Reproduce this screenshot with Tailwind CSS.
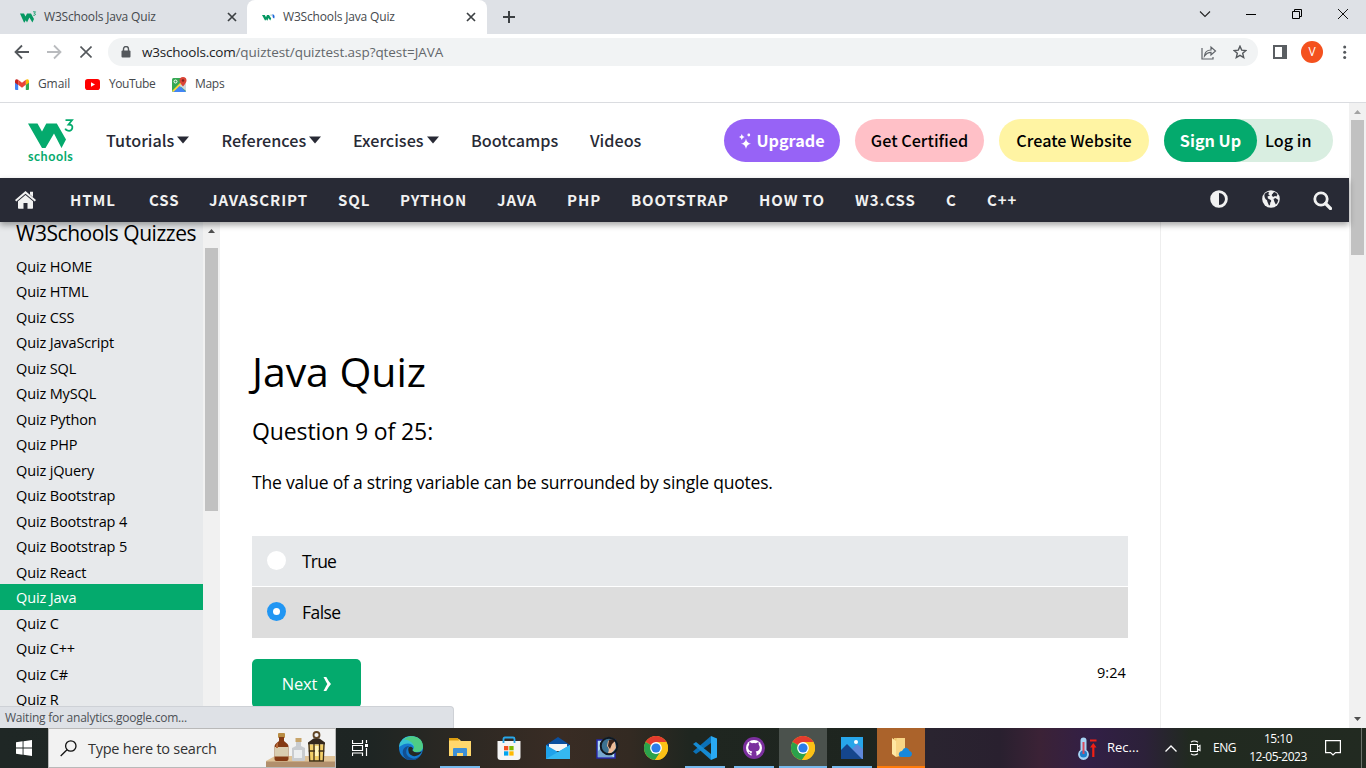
<!DOCTYPE html>
<html lang="en">
<head>
<meta charset="utf-8">
<title>W3Schools Java Quiz</title>
<script src="https://cdn.jsdelivr.net/npm/@tailwindcss/browser@4"></script>
</head>
<body class="w-[1366px] h-[768px] overflow-hidden bg-white font-['Open_Sans','Noto_Sans',sans-serif] text-black whitespace-nowrap">
<svg class="hidden">
  <defs>
    <symbol id="chrome" viewBox="0 0 24 24">
      <circle cx="12" cy="12" r="12" fill="#fbc116"/>
      <path d="M12 12 1.6 6A12 12 0 0 1 22.4 6z" fill="#e33b2e"/>
      <path d="M12 12 1.6 6A12 12 0 0 0 11 24l6.2-9z" fill="#2ba24c"/>
      <path d="M12 6H22.4A12 12 0 0 1 11 24l6-9z" fill="#fbc116"/>
      <circle cx="12" cy="12" r="5.9" fill="#fff"/><circle cx="12" cy="12" r="4.6" fill="#2a7de9"/>
    </symbol>
  </defs>
</svg>

<!-- Tab strip -->
<div class="flex h-[34px] bg-[#dee1e6] text-[12px] text-[#45494d] tracking-[-0.17px]">
  <div class="flex w-[247px] items-center pl-[20px]">
    <svg class="w-[17px] h-[12px]" viewBox="0 0 17 12"><path d="M0 2.500h4l1.500 3 1.500-3h4l3 5.500-1.600 3.500-3-5-2.400 5H7l-1.200-2.300L4.500 11.500H4z" fill="#059862"/><path d="M13 .8h2.500L14.200 2.500q1.800 0 1 1.500-.8.800-2 .2" fill="none" stroke="#059862" stroke-width=".8"/></svg>
    <span class="ml-[7px] w-[183px]">W3Schools Java Quiz</span>
    <svg class="w-[10px] h-[10px]" viewBox="0 0 10 10"><path d="M1 1l8 8M9 1L1 9" stroke="#3c4043" stroke-width="1.7"/></svg>
  </div>
  <div class="flex w-[240px] items-center rounded-t-[8px] bg-white pl-[15px]">
    <svg class="w-[14px] h-[8px]" viewBox="0 0 14 8"><path d="M0 2h2.800L4 4.200 5 2h2l2.200 3.500-1 2L6.500 5 5.500 7.500H5l-.8-1.200-.8 1.200H3z" fill="#059862"/><path d="M8.500 1.500h1.200v1.300H8.500z" fill="#9cc5b3"/><path d="M10.500 1q3 1 1.700 4.500-2-.5-1.700-4.500z" fill="#1a66d9"/></svg>
    <span class="ml-[7px] w-[182px]">W3Schools Java Quiz</span>
    <svg class="ml-[1px] w-[10px] h-[10px]" viewBox="0 0 10 10"><path d="M1 1l8 8M9 1L1 9" stroke="#3c4043" stroke-width="1.700"/></svg>
  </div>
  <div class="flex flex-1 items-center pl-[16px]">
    <svg class="w-[12px] h-[12px]" viewBox="0 0 12 12"><path d="M6 0v12M0 6h12" stroke="#3c4043" stroke-width="2"/></svg>
  </div>
  <div class="flex items-center pb-[6px] pr-[18px]">
    <svg class="w-[12px] h-[8px] mr-[35px]" viewBox="0 0 12 8"><path d="M1 1.500l5 5 5-5" fill="none" stroke="#222" stroke-width="1.100"/></svg>
    <svg class="w-[10px] h-[10px] mr-[36px]" viewBox="0 0 10 10"><path d="M0 5.500h10" stroke="#000"/></svg>
    <svg class="w-[10px] h-[10px] mr-[36px]" viewBox="0 0 10 10"><path d="M.5 2.500h7v7h-7zM2.500 2.500v-2h7v7h-2" fill="none" stroke="#000"/></svg>
    <svg class="w-[10px] h-[10px]" viewBox="0 0 10 10"><path d="M0 0l10 10M10 0L0 10" stroke="#111"/></svg>
  </div>
</div>

<!-- Address bar -->
<div class="flex h-[36px] items-center pl-[14px]">
  <svg class="w-[16px] h-[16px]" viewBox="0 0 16 16"><path d="M15 8H2M8 1.500L1.500 8 8 14.500" fill="none" stroke="#54585c" stroke-width="1.800"/></svg>
  <svg class="ml-[16px] w-[16px] h-[16px]" viewBox="0 0 16 16"><path d="M1 8h13M8 1.500L14.500 8 8 14.500" fill="none" stroke="#b9bbbe" stroke-width="1.800"/></svg>
  <svg class="ml-[18px] w-[12px] h-[12px]" viewBox="0 0 12 12"><path d="M.5.5l11 11M11.500.5l-11 11" stroke="#54585c" stroke-width="1.600"/></svg>
  <div class="ml-[16px] flex h-[28px] w-[1150px] items-center rounded-full bg-[#f1f3f4] pl-[13px] text-[13.500px] text-[#63676b]">
    <svg class="w-[10px] h-[12px]" viewBox="0 0 10 12"><path d="M2.500 5V3a2.500 2.500 0 0 1 5 0v2" fill="none" stroke="#54585c" stroke-width="1.400"/><rect x=".5" y="4.500" width="9" height="7" rx="1" fill="#54585c"/></svg>
    <span class="ml-[11px] flex-1 tracking-[-0.06px]"><span class="tracking-[-0.2px] text-[#202124]">w3schools.com</span>/quiztest/quiztest.asp?qtest=JAVA</span>
    <svg class="w-[16px] h-[15px]" viewBox="0 0 16 15"><path d="M1 3v11h11v-2M3.500 11q.5-6 6.500-6V2l4.500 4-4.500 4V7.300q-4 0-6.500 3.700z" fill="none" stroke="#5f6368" stroke-width="1.200"/></svg>
    <svg class="ml-[16px] mr-[11px] w-[14px] h-[14px]" viewBox="0 0 14 14"><path d="M7 1.200l1.700 3.900 4.200.4-3.200 2.800 1 4.200L7 10.300l-3.700 2.200 1-4.200L1.100 5.500l4.200-.4z" fill="none" stroke="#54585c" stroke-width="1.400"/></svg>
  </div>
  <svg class="ml-[15px] w-[14px] h-[14px]" viewBox="0 0 14 14"><path d="M0 0h14v14H0zM2 2v10h7V2z" fill="#5a5e62" fill-rule="evenodd"/></svg>
  <div class="ml-[14px] flex h-[22px] w-[22px] items-center justify-center rounded-full bg-[#f4511e] text-[12px] text-white">V</div>
  <svg class="ml-[20px] w-[4px] h-[14px]" viewBox="0 0 4 14"><g fill="#54585c"><circle cx="1.700" cy="2" r="1.500"/><circle cx="1.700" cy="7.200" r="1.500"/><circle cx="1.700" cy="12.400" r="1.500"/></g></svg>
</div>

<!-- Bookmarks -->
<div class="flex h-[33px] items-center border-b border-[#dadce0] pb-[4px] pl-[15px] text-[12px] text-[#45494d] tracking-[-0.1px]">
  <svg class="w-[14px] h-[11px]" viewBox="0 0 14 11"><path d="M0 2v8q0 1 1 1h2.200V4z" fill="#4285f4"/><path d="M14 2v8q0 1-1 1h-2.200V4z" fill="#34a853"/><path d="M0 1.500Q1-.5 3.200.8V6L0 3.800z" fill="#c5221f"/><path d="M14 1.500Q13-.5 10.800.8V6L14 3.800z" fill="#fbbc04"/><path d="M3.200.8L7 3.800 10.800.8V5.800L7 8.800 3.200 5.800z" fill="#ea4335"/></svg>
  <span class="ml-[9px] w-[47px]">Gmail</span>
  <svg class="w-[15px] h-[11px]" viewBox="0 0 15 11"><rect width="15" height="11" rx="2.800" fill="#f00"/><path d="M6 3.200v4.600l4-2.300z" fill="#fff"/></svg>
  <span class="ml-[9px] w-[63px] tracking-[-0.45px]">YouTube</span>
  <svg class="w-[15px] h-[15px]" viewBox="0 0 15 15"><rect y="1" width="14" height="14" rx="1.500" fill="#34a853"/><path d="M1 15L7.500 8.500 14 15z" fill="#4285f4"/><path d="M0 14L11 3l3 2.500L2 15z" fill="#fdd835"/><path d="M7.500 8.500L14 3v11z" fill="#cfd8dc"/><path d="M1.500 15l6-6 6 6z" fill="#4285f4"/><circle cx="3.500" cy="4.500" r="1.500" fill="none" stroke="#fff"/><path d="M11 9.500Q7.500 5.500 7.500 3.500a3.500 3.500 0 0 1 7 0Q14.500 5.500 11 9.500z" fill="#db4437"/><circle cx="11" cy="3.500" r="1.200" fill="#7b231c"/></svg>
  <span class="ml-[8px] tracking-[-0.3px]">Maps</span>
</div>

<!-- Web page -->
<div class="relative flex h-[625px]">
  <div class="flex w-[1349px] flex-col">
    <header class="flex h-[75px] shrink-0 items-center bg-white pl-[28px] font-['Noto_Sans_CJK_JP',sans-serif] text-[16.200px] font-medium text-[#282a35]">
      <div class="flex h-[43px] w-[78px] flex-col">
        <svg class="w-[46px] h-[31px] shrink-0 overflow-visible" viewBox="0 0 46 31"><path d="M0 4.500h9.500L14 12.500 18.300 4.500h10.500L38 20.500 33.500 29 26 14.500 17.500 29h-3.500z" fill="#04aa6d"/><path d="M37.500 1.200h6.500l-3.500 4.300q4.500 0 3.800 3.600-.8 3.200-4.300 2.600-2-.3-2.800-2" fill="none" stroke="#04aa6d" stroke-width="1.800"/></svg>
        <span class="font-['Lato',sans-serif] text-[12.500px] font-bold leading-[13px] tracking-[0.55px] text-[#04aa6d]">schools</span>
      </div>
      <div class="flex w-[115.500px] items-center gap-[3px]">Tutorials<svg class="w-[12px] h-[8px]" viewBox="0 0 12 8"><path d="M0 .5h12L6 7.500z" fill="#282a35"/></svg></div>
      <div class="flex w-[131.500px] items-center gap-[3px]">References<svg class="w-[12px] h-[8px]" viewBox="0 0 12 8"><path d="M0 .5h12L6 7.500z" fill="#282a35"/></svg></div>
      <div class="flex w-[118px] items-center gap-[3px]">Exercises<svg class="w-[12px] h-[8px]" viewBox="0 0 12 8"><path d="M0 .5h12L6 7.500z" fill="#282a35"/></svg></div>
      <div class="w-[119px]">Bootcamps</div>
      <div class="w-[134px]">Videos</div>
      <div class="flex h-[43px] w-[116px] items-center justify-center gap-[5px] rounded-[22px] bg-[#9763f6] font-bold text-white"><svg class="w-[12px] h-[16px]" viewBox="0 0 12 16"><path d="M7 5.500q.7 4.600 5 5.200-4.300.6-5 5.200-.7-4.600-5-5.200 4.300-.6 5-5.200zM2.800 1q.5 2.500 2.800 3-2.300.5-2.800 3Q2.300 4.500 0 4q2.300-.5 2.800-3z" fill="#fff"/><circle cx="9.800" cy="2" r="1.400" fill="#fff"/></svg>Upgrade</div>
      <div class="ml-[15px] flex h-[43px] w-[129px] items-center justify-center rounded-[22px] bg-[#ffc0c7] text-black">Get Certified</div>
      <div class="ml-[15px] flex h-[43px] w-[150px] items-center justify-center rounded-[22px] bg-[#fff4a3] text-black">Create Website</div>
      <div class="ml-[15px] flex h-[43px] w-[169px] items-center rounded-[22px] bg-[#d9eee1] text-black"><div class="flex h-[43px] w-[93px] items-center justify-center rounded-[22px] bg-[#04aa6d] font-bold text-white">Sign Up</div><span class="ml-[8px]">Log in</span></div>
    </header>
    <nav class="z-10 flex h-[44px] shrink-0 items-center bg-[#282a35] pl-[15px] font-['Noto_Sans_CJK_JP',sans-serif] text-[15px] font-bold tracking-[0.9px] text-[#f1f1f1] shadow-[0_3px_6px_rgba(0,0,0,0.35)]">
      <svg class="mr-[34px] w-[21px] h-[18px]" viewBox="0 0 21 18"><path d="M10.500 0L21 9l-1.300 1.400L10.500 2.700 1.300 10.400 0 9zM15 .8h3V6l-3-2.500z" fill="#f1f1f1"/><path d="M10.500 4l7.500 6.200V17q0 .8-.8.800H12.500V12h-4v5.800H3.800Q3 17.800 3 17v-6.800z" fill="#f1f1f1"/></svg>
      <span class="w-[79px]">HTML</span><span class="w-[60px]">CSS</span><span class="w-[129px]">JAVASCRIPT</span><span class="w-[62px]">SQL</span><span class="w-[97px]">PYTHON</span><span class="w-[70px]">JAVA</span><span class="w-[64px]">PHP</span><span class="w-[128px]">BOOTSTRAP</span><span class="w-[96px]">HOW TO</span><span class="w-[91px]">W3.CSS</span><span class="w-[41px]">C</span><span class="flex-1">C++</span>
      <svg class="mb-[2px] w-[18px] h-[18px]" viewBox="0 0 18 18"><circle cx="9" cy="9" r="7.400" fill="none" stroke="#f1f1f1" stroke-width="2.800"/><path d="M9 2v14A7 7 0 0 1 9 2z" fill="#f1f1f1"/></svg>
      <svg class="mb-[2px] ml-[34px] w-[18px] h-[18px]" viewBox="0 0 18 18"><circle cx="9" cy="9" r="8.800" fill="#f1f1f1"/><path d="M3 3.500Q1.500 6 3.500 9q2 1 2 3l1.500 3.500 1-.5.300-2.500q1.500-1.500.5-2.500L6 8.500l-.5-2L8 5.500 7.500 3 6 1.800zM11 3l-1.500 2 1.500 2 2-1 1.500.5 1-2Q14.500 2.500 12.500 2zM11.500 9l2-1 2.800 2q-.5 3-2.500 4.500L12.500 12z" fill="#282a35"/><path d="M6 4l3-2.500L11 3 8.500 6z" fill="#f1f1f1"/></svg>
      <svg class="ml-[33px] mr-[17px] w-[19px] h-[19px]" viewBox="0 0 19 19"><circle cx="8" cy="8" r="6.200" fill="none" stroke="#f1f1f1" stroke-width="2.800"/><path d="M12.500 12.500l5 5" stroke="#f1f1f1" stroke-width="3.200" stroke-linecap="round"/></svg>
    </nav>
    <div class="flex h-[506px]">
      <aside class="w-[203px] shrink-0 bg-[#e7e9eb] text-[14.500px] tracking-[-0.14px]">
        <h2 class="h-[30.500px] pl-[16px] text-[21px] leading-[23px] tracking-[-0.46px]">W3Schools Quizzes</h2>
        <ul class="leading-[25.500px] [&>li]:h-[25.500px] [&>li]:pl-[16px] [&>li]:pt-[1px]">
          <li>Quiz HOME</li><li>Quiz HTML</li><li>Quiz CSS</li><li>Quiz JavaScript</li><li>Quiz SQL</li><li>Quiz MySQL</li><li>Quiz Python</li><li>Quiz PHP</li><li>Quiz jQuery</li><li>Quiz Bootstrap</li><li>Quiz Bootstrap 4</li><li>Quiz Bootstrap 5</li><li>Quiz React</li><li class="bg-[#04aa6d] text-white">Quiz Java</li><li>Quiz C</li><li>Quiz C++</li><li>Quiz C#</li><li>Quiz R</li>
        </ul>
      </aside>
      <div class="flex w-[17px] shrink-0 flex-col items-center bg-[#f1f1f1] pt-[7px]">
        <svg class="w-[7px] h-[4px]" viewBox="0 0 7 4"><path d="M0 4L3.500 0 7 4z" fill="#505050"/></svg>
        <div class="mr-px mt-[15px] h-[263px] w-[13px] bg-[#c1c1c1]"></div>
      </div>
      <main class="w-[941px] shrink-0 border-r border-[#eeeeee] pl-[32px] pt-[119px]">
        <h1 class="h-[60px] text-[41px] leading-[60px] tracking-[-0.05px]">Java Quiz</h1>
        <h2 class="mt-[12px] h-[36px] text-[23px] leading-[36px] tracking-[-0.1px]">Question 9 of 25:</h2>
        <p class="mt-[19px] h-[28px] text-[17.500px] leading-[28px] tracking-[-0.210px]">The value of a string variable can be surrounded by single quotes.</p>
        <div class="mt-[40px] w-[876px] text-[17.500px] tracking-[-0.550px]">
          <div class="flex h-[50px] items-center bg-[#e7e9eb] pl-[15px]"><span class="mb-[1px] mr-[16px] h-[19px] w-[19px] rounded-full bg-white"></span><span class="tracking-[-0.8px]">True</span></div>
          <div class="mt-px flex h-[51px] items-center bg-[#dddddd] pl-[15px]"><span class="mb-[2px] mr-[16px] flex h-[19px] w-[19px] items-center justify-center rounded-full bg-[#2196f3]"><span class="h-[7px] w-[7px] rounded-full bg-white"></span></span>False</div>
        </div>
        <div class="mt-[21px] flex w-[876px] justify-between pr-[2px]">
          <div class="flex h-[49px] w-[109px] items-center justify-center gap-[5px] rounded-[5px] bg-[#04aa6d] pt-[1px] text-[16.500px] text-white tracking-[-0.2px]">Next<svg class="w-[9px] h-[14px]" viewBox="0 0 9 14"><path d="M1.500 0H4.300Q6.300 4 9 7 6.300 10 4.300 14H1.500Q3.500 10 5.300 7 3.500 4 1.500 0z" fill="#fff"/></svg></div>
          <span class="text-[14.500px] leading-[28px] tracking-[0.1px]">9:24</span>
        </div>
      </main>
    </div>
  </div>
  <div class="flex w-[17px] flex-col items-center bg-[#f1f1f1] pt-[7px]">
    <svg class="w-[7px] h-[4px]" viewBox="0 0 7 4"><path d="M0 4L3.500 0 7 4z" fill="#a3a3a3"/></svg>
    <div class="mt-[6px] h-[135px] w-[13px] bg-[#c1c1c1]"></div>
    <svg class="mt-auto mb-[7px] w-[7px] h-[4px]" viewBox="0 0 7 4"><path d="M0 0L3.500 4 7 0z" fill="#505050"/></svg>
  </div>
  <div class="absolute bottom-0 left-0 z-20 h-[22px] w-[454px] rounded-tr-[4px] border-r border-t border-[#ced1d6] bg-[#dee1e6] pl-[5px] text-[12px] leading-[22px] tracking-[-0.23px] text-[#4d5156]">Waiting for analytics.google.com...</div>
</div>

<!-- Taskbar -->
<footer class="flex h-[40px] items-center bg-[linear-gradient(90deg,#1f2725_0,#1e2523_370px,#2b2823_450px,#392c24_560px,#332a22_630px,#1f2620_690px,#1e251f_870px,#2a2430_930px,#29202f_1000px,#3b2236_1040px,#321f46_1090px,#2c2139_1145px,#212a20_1190px,#222a21_1366px)] text-white">
  <div class="flex w-[48px] justify-center"><svg class="w-[16px] h-[16px]" viewBox="0 0 16 16"><path d="M0 2.300L6.600 1.300V7.500H0zM7.500 1.200L16 0v7.500H7.500zM0 8.500h6.600v6.200L0 13.700zM7.500 8.500H16V16l-8.500-1.200z" fill="#fff"/></svg></div>
  <div class="flex h-[40px] w-[288px] items-center border border-[#b9b9b9] bg-[#f2f2f2] pl-[11px] text-[#333]">
    <svg class="w-[17px] h-[17px]" viewBox="0 0 17 17"><circle cx="10.800" cy="6" r="5.200" fill="none" stroke="#111" stroke-width="1.300"/><path d="M7 9.800L.7 16" stroke="#111" stroke-width="1.300"/></svg>
    <span class="ml-[11px] flex-1 pt-[1px] text-[14.500px] tracking-[-0.25px]">Type here to search</span>
    <svg class="w-[69px] h-[38px]" viewBox="0 0 69 38">
      <path d="M0 32l9-5h60v11H0z" fill="#e0c397"/><path d="M0 32.500h69v5.500H0z" fill="#b18f6c"/>
      <rect x="12" y="4" width="7" height="5" rx="1" fill="#b98d45"/><path d="M13 8h5v4l3.500 3q1 1 1 3v12q0 2-2 2h-10q-2 0-2-2V18q0-2 1-3l3.500-3z" fill="#843a14"/><rect x="8.500" y="18" width="14" height="9.500" fill="#d9cdb0"/><path d="M12 13l-2 3v3h2z" fill="#b76a3b"/>
      <rect x="29.500" y="9" width="6" height="4" fill="#c8a56b"/><path d="M30 13h5v4l4 2v12q0 1-1 1H27q-1 0-1-1V19l4-2z" fill="#c9ccd0"/><rect x="28" y="21" width="8" height="8" fill="#eceef0"/>
      <circle cx="50.500" cy="6" r="3" fill="none" stroke="#614526" stroke-width="1.800"/><path d="M42 13.500l5.500-4h6l5.500 4v2H42z" fill="#33271c"/><path d="M42.500 15.500h16l-1 17h-14z" fill="#f2cf68"/><path d="M43 15l.7 17h13.600l.7-17M48 15v17M53.500 15v17M42.500 22h16" fill="none" stroke="#3c2c18" stroke-width="1.300"/><path d="M49 17h3.500v10H49z" fill="#fff4bd"/>
    </svg>
  </div>
  <div class="flex w-[48px] justify-center"><svg class="w-[16px] h-[16px]" viewBox="0 0 16 16"><path d="M.5 0v3.500h10V0M.5 16v-3h10v3M.5 5.500h10v5H.5zM14.500 0v3M14.500 8v8" fill="none" stroke="#fff" stroke-width="1.200"/><rect x="13" y="4" width="3" height="3" fill="#fff"/></svg></div>
  <div class="flex w-[53px] justify-center"><svg class="w-[24px] h-[24px]" viewBox="0 0 24 24"><circle cx="12" cy="12" r="12" fill="#1479cf"/><path d="M0 11Q1 1 11.500 0 23 0 24 10.500 24 15.500 18 16q-4 0-4.500-1.500Q16 12 14 9.500 9 5 0 11z" fill="#38c2d3"/><path d="M14 .3Q24 2 24 11q-1 5-6 5-4 0-4.500-1.500Q16 12 14.500 9 12 4 5 3.500 9-.5 14 .3z" fill="#55d06b" opacity=".75"/><path d="M8.500 11.500Q5 18 11 21.500q5 3 10.500-2Q15 28 7 23 2 18 4.500 13q2-3 6-3z" fill="#124f91"/><path d="M9.500 11.500q3-2 4.500 1-.8 1-.5 2 2.500 3.500 9.500 1Q19 21 14 20 8 18 9.500 11.500z" fill="#262824"/></svg></div>
  <div class="flex h-[40px] w-[40px] items-center justify-center border-b-2 border-[#76b9ed] mx-[3px]"><svg class="w-[22px] h-[19px] mt-[1px]" viewBox="0 0 22 19"><path d="M0 1h10l2 2h10v15H0z" fill="#ffd76c"/><path d="M0 0h9l1 2.500H0z" fill="#dd9e10"/><path d="M4 18v-7q0-1 1-1h12q1 0 1 1v7h-4v-3H8v3z" fill="#3d8fd6"/></svg></div>
  <div class="flex w-[52px] justify-center"><svg class="w-[24px] h-[24px]" viewBox="0 0 24 24"><path d="M.5 5h23v16q0 3-3 3h-17q-3 0-3-3z" fill="#f5f5f5"/><path d="M6.500 7V3q0-1.500 1.500-1.500h8q1.500 0 1.500 1.500v4" fill="none" stroke="#28a8ea" stroke-width="1.800"/><path d="M7 10h4.300v4.300H7z" fill="#f25022"/><path d="M12.300 10h4.300v4.300h-4.300z" fill="#7fba00"/><path d="M7 15.300h4.300v4.300H7z" fill="#00a4ef"/><path d="M12.300 15.300h4.300v4.300h-4.300z" fill="#ffb900"/></svg></div>
  <div class="flex w-[46px] justify-center"><svg class="w-[24px] h-[23px]" viewBox="0 0 24 23"><path d="M0 8l12-8 12 8v4H0z" fill="#0b4f9e"/><path d="M3 7h18v7H3z" fill="#f5f5f5"/><path d="M0 8l12 7L24 8v14H0z" fill="#1fa2ea"/><path d="M0 22l24-14v14z" fill="#35b8f1"/></svg></div>
  <div class="flex w-[52px] justify-center"><svg class="w-[24px] h-[24px]" viewBox="0 0 24 24"><path d="M2 4h18v18H2z" fill="#b4dcf4" stroke="#2529a9" stroke-width="1.500"/><path d="M3 15l6-5 9 11H3z" fill="#78a9d0"/><circle cx="14" cy="10" r="9" fill="#3c7291"/><path d="M13 5q4-3 7 1l1 6-5 6-3-1q2-4-1-7z" fill="#efbd98"/><path d="M14 4q4-2 6 1l-3 3-2 5-2-3z" fill="#3a2218"/><circle cx="14" cy="10" r="8.300" fill="none" stroke="#111820" stroke-width="2"/></svg></div>
  <div class="flex w-[46px] justify-center"><svg class="w-[24px] h-[24px]"><use href="#chrome"/></svg></div>
  <div class="flex h-[40px] w-[40px] items-center justify-center border-b-2 border-[#76b9ed] ml-[6px]"><svg class="w-[24px] h-[24px] mt-[1px]" viewBox="0 0 24 24"><path d="M18 0v7L3 18 0 15.500z" fill="#0b72b8"/><path d="M0 8l3-2 15 12v6z" fill="#168bd2"/><path d="M18 0l6 2.500v19L18 24z" fill="#29a9f2"/></svg></div>
  <div class="flex h-[40px] w-[40px] items-center justify-center border-b-2 border-[#76b9ed] mx-[9px]"><svg class="w-[22px] h-[22px] mt-[1px]" viewBox="0 0 22 22"><circle cx="11" cy="11" r="11" fill="#7b2f9e"/><circle cx="11" cy="11" r="8" fill="#fff"/><path d="M8.500 19v-2.500q-2 .5-3-1.500.8-.5 1.500.5t1.700.3l.5-1.300q-4-.5-4-4 0-1.500 1-2.700-.3-1 .2-2.500 1.200 0 2.500 1 2-.6 4 0 1.400-1 2.600-1 .5 1.500.2 2.500 1 1.200 1 2.700 0 3.500-4 4 .8.800.8 2V19z" fill="#7b2f9e"/></svg></div>
  <div class="flex h-[40px] w-[48px] items-center justify-center border-b-2 border-[#76b9ed] bg-[#4b524d] -ml-[4px]"><svg class="w-[24px] h-[24px] mt-[2px]"><use href="#chrome"/></svg></div>
  <div class="flex h-[40px] w-[40px] items-center justify-center border-b-2 border-[#76b9ed] mx-[5px]"><svg class="w-[22px] h-[22px] mt-[2px]" viewBox="0 0 22 22"><path d="M0 0h22v22H0z" fill="#27a6ea"/><path d="M10 13l6-6 6 5v10H10z" fill="#5f88d8"/><path d="M0 13l6-6 15 15H0z" fill="#15468c"/><circle cx="15" cy="5" r="2" fill="#fff"/></svg></div>
  <div class="flex h-[40px] w-[48px] items-center justify-center border-b-2 border-[#ff7b0a] bg-[#ab632b]"><svg class="w-[20px] h-[20px] ml-[2px] mt-[2px]" viewBox="0 0 20 20"><path d="M2 0h11v17H2z" fill="#eec46e"/><path d="M0 0l4 3v16l-4-3z" fill="#ffe7a3"/><path d="M4 3l1-3h8v17l-9 2z" fill="#f8d586"/><path d="M9 19q-3-1-2-4 1-2 3-2 2-4 5-3 2 1 2.500 3 2.500.5 2.500 3t-2.500 3z" fill="#1788dc"/></svg></div>
  <div class="flex flex-1 items-center pl-[153px] text-[12.500px]">
    <svg class="w-[19px] h-[23px]" viewBox="0 0 19 23"><path d="M2.500 3.500a3 3 0 0 1 6 0V13a5.400 5.400 0 1 1-6 0z" fill="#a7d4f5"/><circle cx="5.500" cy="17" r="3.600" fill="#1d80cc"/><path d="M5.500 5v12" stroke="#d84c60" stroke-width="2"/><path d="M12 3.500h6.500M15.300 20V8" stroke="#f22014" stroke-width="2.200"/><path d="M12 10.500l3.300-4.500 3.200 4.500z" fill="#f22014"/></svg>
    <span class="ml-[10px] w-[58px] text-[13px]">Rec...</span>
    <svg class="w-[12px] h-[7px]" viewBox="0 0 12 7"><path d="M.5 6.500L6 1l5.500 5.500" fill="none" stroke="#fff" stroke-width="1.300"/></svg>
    <svg class="ml-[12px] w-[12px] h-[16px]" viewBox="0 0 12 16"><path d="M1.500 4.500h7v7h-7zM8.500 7l2.500-1.500v5L8.500 9M2 2.200q3-2.500 7 0M2 13.800q3 2.500 7 0" fill="none" stroke="#fff" stroke-width="1.100"/></svg>
    <span class="ml-[12px] w-[24px] text-[12px] tracking-[-0.5px]">ENG</span>
    <div class="ml-[7px] w-[68px] text-center text-[12px] leading-[18px] tracking-[-0.5px]"><div>15:10</div><div>12-05-2023</div></div>
    <svg class="ml-[13px] w-[16px] h-[16px]" viewBox="0 0 16 16"><path d="M.6.600h14.800v12H10.500L8 15l-2.500-2.400H.6z" fill="none" stroke="#fff" stroke-width="1.200"/></svg>
    <div class="ml-auto mr-[4px] h-[40px] w-px bg-[#6c726b]"></div>
  </div>
</footer>
</body>
</html>
